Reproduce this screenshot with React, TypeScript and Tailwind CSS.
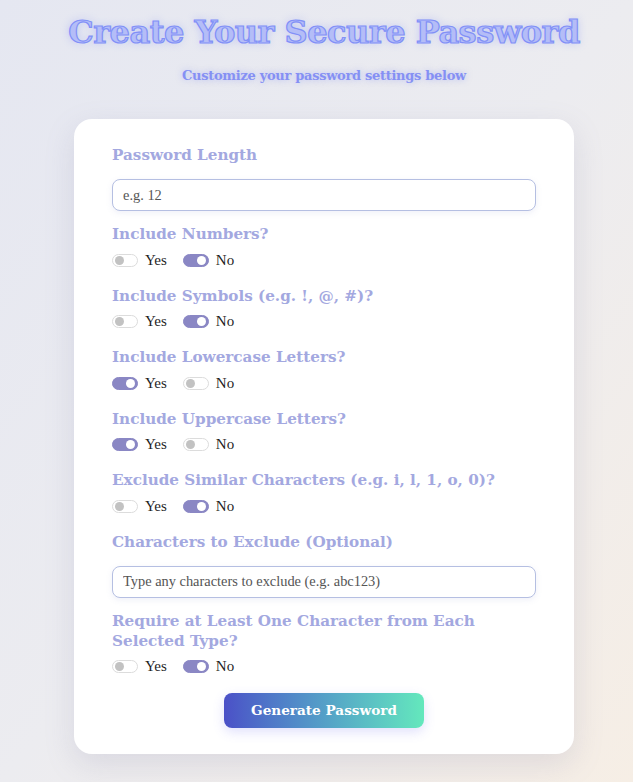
import { useState } from "react";

type Choice = "yes" | "no";

const questions: { label: string; value: Choice }[] = [
  { label: "Include Numbers?", value: "no" },
  { label: "Include Symbols (e.g. !, @, #)?", value: "no" },
  { label: "Include Lowercase Letters?", value: "yes" },
  { label: "Include Uppercase Letters?", value: "yes" },
  { label: "Exclude Similar Characters (e.g. i, l, 1, o, 0)?", value: "no" },
];

function Toggle({ on, onClick }: { on: boolean; onClick: () => void }) {
  return (
    <button
      type="button"
      onClick={onClick}
      className={
        "relative w-[26px] h-[13px] rounded-full border flex items-center px-[2px] " +
        (on ? "bg-[#8a87c4] border-[#8a87c4] justify-end" : "bg-white border-[#dcdcdc] justify-start")
      }
    >
      <span className={"block w-[9px] h-[9px] rounded-full " + (on ? "bg-white" : "bg-[#c2c2c2]")} />
    </button>
  );
}

function YesNo({ initial }: { initial: Choice }) {
  const [val, setVal] = useState<Choice>(initial);
  return (
    <div className="flex items-center h-4 mt-2 font-['Liberation_Serif',serif] text-[15px] text-[#1f1f1f]">
      <Toggle on={val === "yes"} onClick={() => setVal("yes")} />
      <span className="ml-[7px]">Yes</span>
      <span className="ml-4" />
      <Toggle on={val === "no"} onClick={() => setVal("no")} />
      <span className="ml-[7px]">No</span>
    </div>
  );
}

const labelCls = "block text-[15.2px] leading-5 font-bold text-[#a3a8e0]";
const inputCls =
  "mt-[14px] w-full h-8 rounded-lg border border-[#b5bfe2] px-[10px] font-['Liberation_Serif',serif] text-[14.4px] text-[#333] placeholder:text-[#555] shadow-[0_2px_6px_rgba(120,130,200,0.12)] outline-none bg-white";

export default function App() {
  return (
    <div className="min-h-screen w-full bg-gradient-to-br from-[#e5e7f1] via-[#ececf0] to-[#f6eee5] flex flex-col items-center pl-[15px] pt-[10px] pb-7 font-['DejaVu_Serif',serif]">
      <h1 className="text-[32px] leading-[44px] font-bold tracking-[-0.5px] text-[#b4bdf7] [-webkit-text-stroke:1.2px_#8190f7] [text-shadow:0_0_8px_rgba(129,144,247,0.45)]">
        Create Your Secure Password
      </h1>
      <p className="mt-[12px] text-[13px] leading-5 font-bold tracking-[-0.3px] text-[#8590f4] [text-shadow:0_0_6px_rgba(129,144,247,0.5)]">
        Customize your password settings below
      </p>

      <div className="mt-[33px] w-[500px] bg-white rounded-[18px] shadow-[0_10px_30px_rgba(120,120,160,0.18)] px-[38px] pt-[26px] pb-[26px]">
        <label className={labelCls}>Password Length</label>
        <input className={inputCls} placeholder="e.g. 12" />

        <div className="mt-[13px]">
          {questions.map((q) => (
            <div key={q.label} className="mb-[17.5px]">
              <div className={labelCls}>{q.label}</div>
              <YesNo initial={q.value} />
            </div>
          ))}
        </div>

        <label className={labelCls}>Characters to Exclude (Optional)</label>
        <input className={inputCls} placeholder="Type any characters to exclude (e.g. abc123)" />

        <div className="mt-[13px]">
          <div className={labelCls}>Require at Least One Character from Each Selected Type?</div>
          <YesNo initial="no" />
        </div>

        <div className="flex justify-center mt-[18px]">
          <button className="w-[200px] h-[35px] rounded-lg bg-gradient-to-r from-[#4b50c7] to-[#64e8bc] text-white text-[13.6px] font-bold shadow-[0_4px_12px_rgba(99,102,241,0.2)]">
            Generate Password
          </button>
        </div>
      </div>
    </div>
  );
}
